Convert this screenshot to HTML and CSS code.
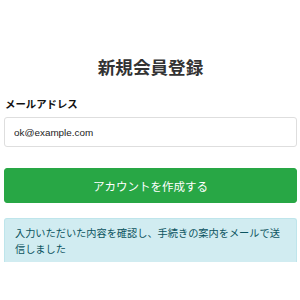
FILE: index.html
```html
<!DOCTYPE html>
<html lang="ja">
<head>
<meta charset="utf-8">
<link rel="stylesheet" href="styles.css">
</head>
<body>
<div class="page">
  <h1 class="title">新規会員登録</h1>
  <label class="label" for="email">メールアドレス</label>
  <input class="input" id="email" type="text" value="ok@example.com">
  <button class="btn">アカウントを作成する</button>
  <div class="alert">入力いただいた内容を確認し、手続きの案内をメールで送信しました</div>
</div>
</body>
</html>
```
FILE: styles.css
```css
html, body {
  margin: 0;
  padding: 0;
  background: #fff;
}
body {
  font-family: "Liberation Sans", "Noto Sans CJK JP", sans-serif;
  color: #212529;
}
.page {
  display: flex;
  flex-direction: column;
  padding: 56px 3px 0 4px;
}
.title {
  margin: 0;
  font-family: "Noto Sans CJK JP", sans-serif;
  font-size: 17.6px;
  line-height: 21px;
  font-weight: 700;
  text-align: center;
  color: #333;
}
.label {
  margin-top: 19px;
  font-family: "Noto Sans CJK JP", sans-serif;
  font-size: 10.4px;
  line-height: 15px;
  font-weight: 700;
  color: #111;
  padding-left: 1px;
}
.input {
  box-sizing: border-box;
  margin: 6px 0 0 0;
  height: 30px;
  width: 100%;
  padding: 0 9px;
  border: 1px solid #dedede;
  border-radius: 3px;
  font-family: "Liberation Sans", sans-serif;
  font-size: 9.9px;
  color: #222;
  background: #fff;
  outline: none;
}
.btn {
  box-sizing: border-box;
  margin-top: 21px;
  height: 35px;
  width: 100%;
  border: 1px solid #28a745;
  border-radius: 3px;
  background: #28a745;
  color: #fff;
  font-family: "Noto Sans CJK JP", sans-serif;
  font-size: 11.5px;
  padding: 0;
}
.alert {
  box-sizing: border-box;
  margin-top: 15px;
  height: 44px;
  padding: 6px 12px 3px 10px;
  background: #d1ecf1;
  border: 1px solid #bee5eb;
  border-bottom: none;
  border-radius: 3px 3px 0 0;
  color: #0c5460;
  font-family: "Noto Sans CJK JP", sans-serif;
  font-size: 10.2px;
  line-height: 15.5px;
  overflow: hidden;
}
```
